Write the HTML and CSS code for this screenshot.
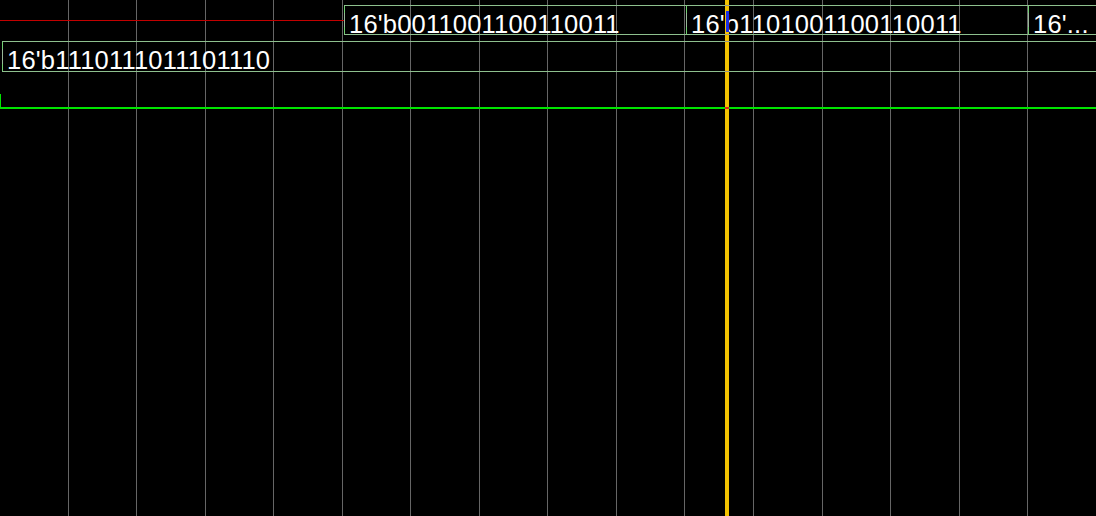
FILE: index.html
```html
<!DOCTYPE html>
<html>
<head>
<meta charset="utf-8">
<link rel="stylesheet" href="styles.css">
</head>
<body>
<div class="wave">
  <div class="cols">
    <span></span><span></span><span></span><span></span><span></span><span></span><span></span><span></span>
    <span></span><span></span><span></span><span></span><span></span><span></span><span></span><span></span>
  </div>
  <div class="rows">
    <div class="row row-a">
      <div class="seg-scalar"><div class="line-red"></div></div>
      <div class="bus bus-w">16'b0011001100110011</div>
      <div class="bus bus-w">16'b1101001100110011</div>
      <div class="bus bus-rest">16'...</div>
    </div>
    <div class="row row-b">
      <div class="bus bus-rest bus-start">16'b1110111011101110</div>
    </div>
    <div class="row row-c"></div>
  </div>
  <div class="cursor"><span class="cursor-mark"></span></div>
</div>
</body>
</html>
```

FILE: styles.css
```css
html, body {
  margin: 0;
  padding: 0;
  background: #000;
  overflow: hidden;
}

.wave {
  position: relative;
  display: grid;
  width: 1096px;
  height: 516px;
  overflow: hidden;
  background: #000;
  font-family: "Liberation Sans", Arial, sans-serif;
}

.cols, .rows {
  grid-area: 1 / 1;
}

.cols {
  display: flex;
  height: 516px;
}

.cols span {
  flex: 0 0 68.55px;
  box-sizing: border-box;
  border-right: 1px solid #666;
}

.rows {
  display: flex;
  flex-direction: column;
}

.row {
  display: flex;
  box-sizing: border-box;
}

.row-a {
  margin-top: 5px;
  height: 30px;
}

.row-b {
  margin-top: 6px;
  height: 31px;
}

.row-c {
  margin-top: 22px;
  height: 15px;
  border-left: 1px solid #00e400;
  border-bottom: 2px solid #00e400;
}

.seg-scalar {
  flex: 0 0 344px;
}

.line-red {
  margin-top: 15px;
  height: 1px;
  background: #c20000;
}

.bus {
  box-sizing: border-box;
  border-top: 1px solid #8ec08e;
  border-bottom: 1px solid #8ec08e;
  padding: 8px 0 0 5px;
  line-height: 20px;
  font-size: 25.5px;
  letter-spacing: 0.2px;
  color: #fff;
  white-space: nowrap;
  background: linear-gradient(#72d072 0 7px, #98b898 7px calc(100% - 7px), #72d072 calc(100% - 7px)) left top / 1px 100% no-repeat;
}

.bus-w {
  flex: 0 0 342px;
}

.bus-rest {
  flex: 1 1 auto;
}

.bus-start {
  margin-left: 2px;
}

.cursor {
  position: absolute;
  left: 725px;
  top: 0;
  width: 4px;
  height: 516px;
  background: linear-gradient(#f2c200 0 5px, #9a9490 5px 6px, #f2c200 6px 34px, #9a9490 34px 35px,
    #f2c200 35px 41px, #9a9490 41px 42px, #f2c200 42px 71px, #9a9490 71px 72px,
    #f2c200 72px 107px, #e02020 107px 109px, #f2c200 109px);
}

.cursor-mark {
  position: absolute;
  left: 1px;
  top: 11px;
  width: 3px;
  height: 21px;
  background: #1a2ee8;
}
```
